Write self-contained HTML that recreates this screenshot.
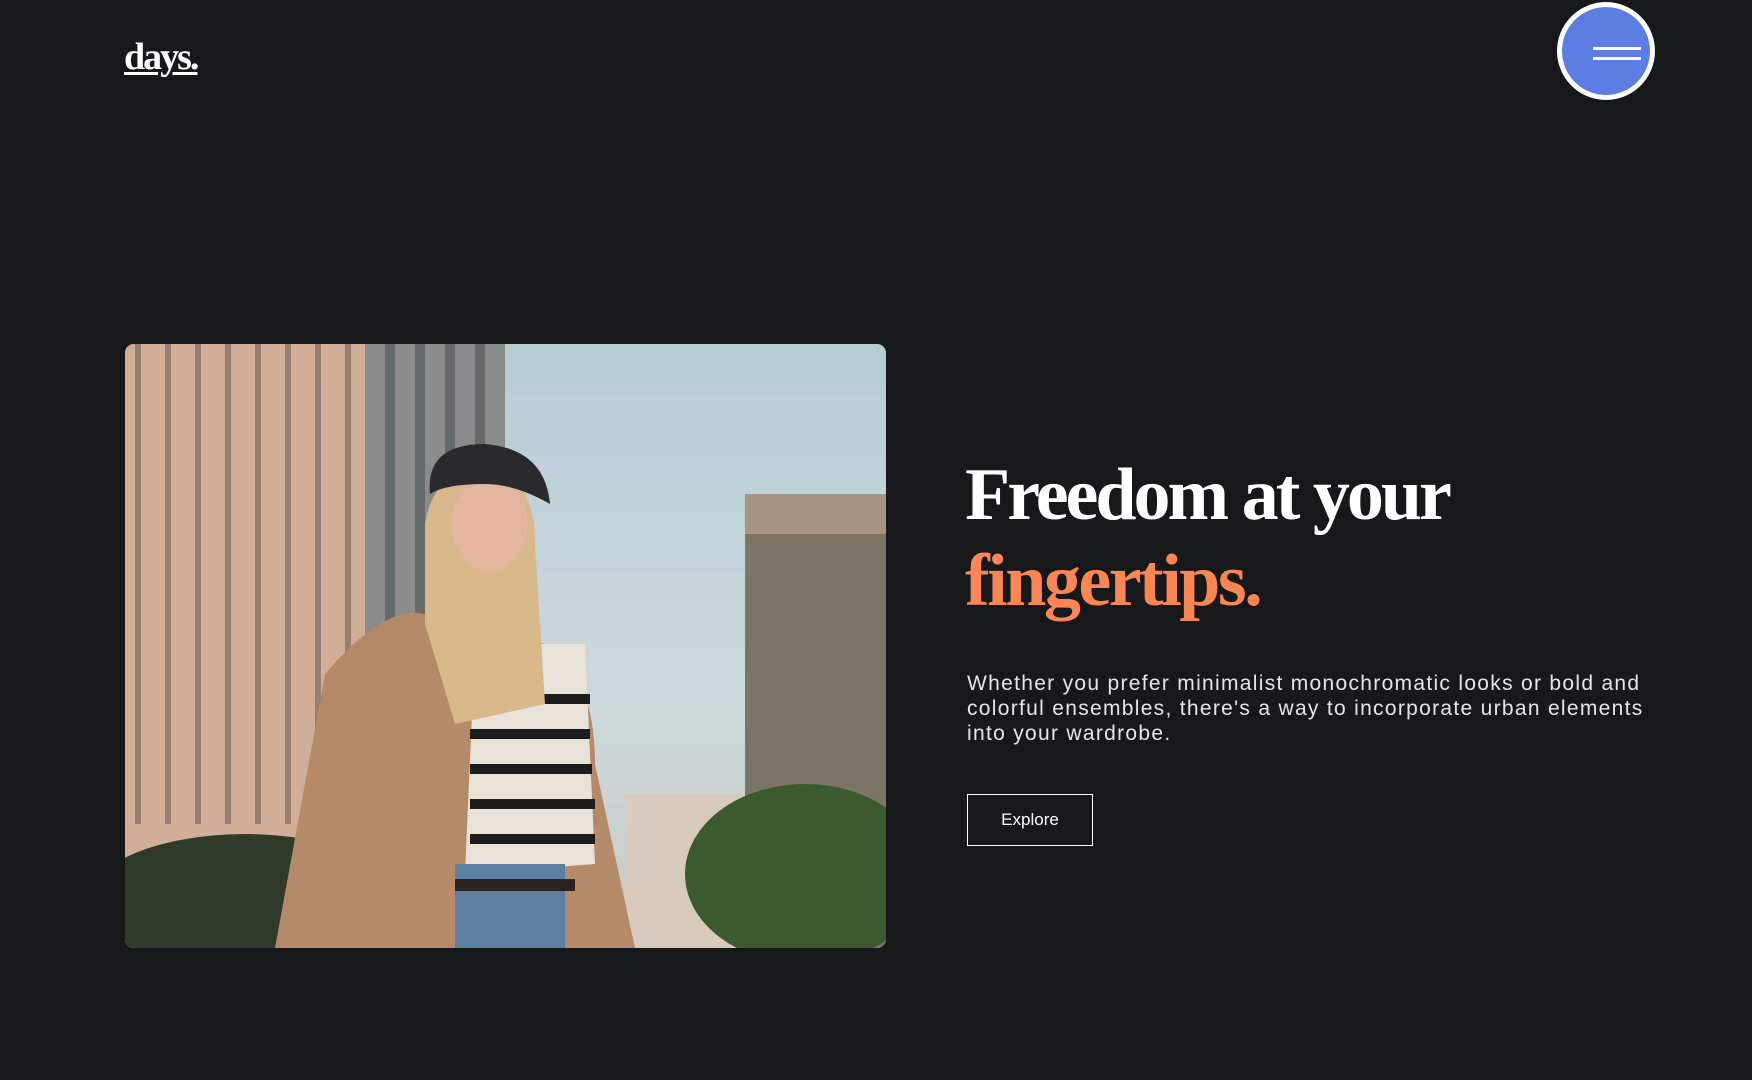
<!DOCTYPE html>
<html><head><meta charset="utf-8"><style>
html,body{margin:0;width:1752px;height:1080px;background:#17181a;overflow:hidden;font-family:"Liberation Sans",sans-serif}
.logo{position:absolute;left:124px;top:35px;font-family:"Liberation Serif",serif;font-weight:bold;font-size:38px;color:#fff;letter-spacing:-2px;text-decoration:underline;text-decoration-thickness:3px;text-underline-offset:3px}
.menu{position:absolute;left:1557px;top:2px;width:88px;height:88px;border-radius:50%;background:#5b7de4;border:5px solid #fff}
.menu i{position:absolute;left:31px;width:48px;height:3px;background:#fff}
.photo{position:absolute;left:125px;top:344px;width:761px;height:604px;border-radius:9px;overflow:hidden;background:linear-gradient(180deg,#b6cdd6 0%,#cdd9dc 60%,#c9c9c2 100%)}
h1{position:absolute;left:965px;top:452px;margin:0;font-family:"Liberation Serif",serif;font-weight:bold;font-size:74px;line-height:86px;color:#fff;letter-spacing:-3px}
h1 span{color:#fb8653;letter-spacing:-2.5px}
p{position:absolute;left:967px;top:671px;width:760px;margin:0;font-size:21px;letter-spacing:1.3px;line-height:25px;color:#e6e6e6;white-space:nowrap}
.btn{position:absolute;left:967px;top:794px;width:124px;height:50px;border:1px solid #fff;color:#fff;font-size:17px;text-align:center;line-height:50px}
</style></head><body>
<div class="logo">days.</div>
<div class="menu"><i style="top:40px"></i><i style="top:50px"></i></div>
<div class="photo">
<svg width="761" height="604" viewBox="0 0 761 604">
<rect x="0" y="0" width="380" height="604" fill="#c9a592"/>
<rect x="0" y="0" width="240" height="604" fill="#d2ae98"/>
<g fill="#6b5a55" opacity="0.55">
<rect x="10" y="0" width="6" height="480"/><rect x="40" y="0" width="6" height="480"/><rect x="70" y="0" width="6" height="480"/><rect x="100" y="0" width="6" height="480"/><rect x="130" y="0" width="6" height="480"/><rect x="160" y="0" width="6" height="480"/><rect x="190" y="0" width="6" height="480"/><rect x="220" y="0" width="6" height="480"/>
</g>
<rect x="240" y="0" width="140" height="604" fill="#8a8c8c"/>
<g fill="#4b5257" opacity="0.6"><rect x="260" y="0" width="10" height="500"/><rect x="290" y="0" width="10" height="500"/><rect x="320" y="0" width="10" height="500"/><rect x="350" y="0" width="10" height="500"/></g>
<rect x="620" y="150" width="141" height="454" fill="#7c7466"/>
<rect x="620" y="150" width="141" height="40" fill="#a69582"/>
<rect x="500" y="450" width="120" height="154" fill="#d8cbbd"/>
<ellipse cx="120" cy="560" rx="160" ry="70" fill="#2f3a2a"/>
<ellipse cx="680" cy="530" rx="120" ry="90" fill="#3c5a30"/>
<path d="M150 604 L200 330 Q260 260 300 270 L340 300 Q380 290 420 300 Q470 330 470 420 L510 604 Z" fill="#b48a68"/>
<path d="M350 300 L460 300 L470 520 L340 530 Z" fill="#e8e2d8"/>
<g fill="#1c1c1c"><rect x="350" y="350" width="115" height="10"/><rect x="345" y="385" width="120" height="10"/><rect x="345" y="420" width="122" height="10"/><rect x="345" y="455" width="125" height="10"/><rect x="345" y="490" width="125" height="10"/></g>
<path d="M300 180 Q310 120 370 120 Q410 140 410 200 L420 360 L330 380 L300 280 Z" fill="#d9b88c"/>
<ellipse cx="365" cy="180" rx="38" ry="48" fill="#e2b59c"/>
<path d="M305 150 Q300 100 360 100 Q420 105 425 160 Q390 140 360 140 Q320 140 305 150 Z" fill="#2a2a2c"/>
<rect x="330" y="520" width="110" height="84" fill="#5a7fa0"/>
<rect x="330" y="535" width="120" height="12" fill="#2a2320"/>
</svg>
</div>
<h1>Freedom at your<br><span>fingertips.</span></h1>
<p>Whether you prefer minimalist monochromatic looks or bold and<br>colorful ensembles, there's a way to incorporate urban elements<br>into your wardrobe.</p>
<div class="btn">Explore</div>
</body></html>
